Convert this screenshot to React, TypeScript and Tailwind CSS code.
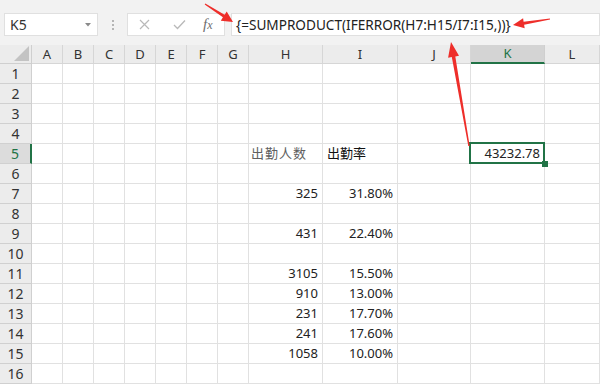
import React from "react";

const FONT = { fontFamily: '"Noto Sans", "Noto Sans CJK SC", "Liberation Sans", sans-serif' };

const cols = ["A", "B", "C", "D", "E", "F", "G", "H", "I", "J", "K", "L"];

type Cell = { text: string; align?: "left" | "right"; cls?: string };
const data: Record<number, Record<string, Cell>> = {
  5: {
    H: { text: "出勤人数", align: "left", cls: "text-[#606060] tracking-[1px] pl-[2px]" },
    I: { text: "出勤率", align: "left", cls: "text-[#111]" },
    K: { text: "43232.78", align: "right" },
  },
  7: { H: { text: "325" }, I: { text: "31.80%" } },
  9: { H: { text: "431" }, I: { text: "22.40%" } },
  11: { H: { text: "3105" }, I: { text: "15.50%" } },
  12: { H: { text: "910" }, I: { text: "13.00%" } },
  13: { H: { text: "231" }, I: { text: "17.70%" } },
  14: { H: { text: "241" }, I: { text: "17.60%" } },
  15: { H: { text: "1058" }, I: { text: "10.00%" } },
};

function arrow(tx: number, ty: number, hx: number, hy: number, w1: number, w2: number, L: number, H: number) {
  const dx = hx - tx, dy = hy - ty;
  const len = Math.hypot(dx, dy);
  const ux = dx / len, uy = dy / len;
  const px = -uy, py = ux;
  const bx = hx - ux * L, by = hy - uy * L;
  const pts = [
    [tx + px * w1 / 2, ty + py * w1 / 2],
    [bx + px * w2 / 2, by + py * w2 / 2],
    [bx + px * H, by + py * H],
    [hx, hy],
    [bx - px * H, by - py * H],
    [bx - px * w2 / 2, by - py * w2 / 2],
    [tx - px * w1 / 2, ty - py * w1 / 2],
  ];
  return pts.map((p) => p.map((v) => v.toFixed(1)).join(",")).join(" ");
}

export default function App() {
  return (
    <div className="relative w-[600px] h-[385px] overflow-hidden bg-white" style={FONT}>
      {/* toolbar */}
      <div className="h-[45px] bg-[#f2f2f2] flex items-start pt-[13px]">
        <div className="ml-[4px] w-[94px] h-[23px] bg-white border border-[#e0e0e0] flex items-center justify-between pl-[5px] pr-[6px]">
          <span className="text-[14px] text-[#333] leading-none">K5</span>
          <svg width="6" height="4" viewBox="0 0 6 4"><path d="M0 0h6L3 3.5z" fill="#8a8a8a" /></svg>
        </div>
        <div className="w-[29px] h-[23px] flex flex-col items-center justify-center gap-[2px]">
          <span className="w-[2px] h-[2px] bg-[#b5b5b5]" />
          <span className="w-[2px] h-[2px] bg-[#b5b5b5]" />
          <span className="w-[2px] h-[2px] bg-[#b5b5b5]" />
        </div>
        <div className="w-[98px] h-[23px] bg-white border border-[#e0e0e0] flex items-center">
          <svg className="ml-[11px]" width="11" height="11" viewBox="0 0 11 11"><path d="M1 1L10 10M10 1L1 10" stroke="#b9b9b9" strokeWidth="1.2" /></svg>
          <svg className="ml-[23px]" width="13" height="11" viewBox="0 0 13 11"><path d="M1 6L4.5 9.5L12 1.5" stroke="#b9b9b9" strokeWidth="1.3" fill="none" /></svg>
          <span className="ml-[17px] text-[15px] italic text-[#6e6e6e] leading-none" style={{ fontFamily: '"Liberation Serif", serif' }}>
            f<span className="text-[12px]">x</span>
          </span>
        </div>
        <div className="ml-[6px] flex-1 h-[23px] bg-white border border-[#e0e0e0] flex items-center pl-[4px]">
          <span className="text-[13.6px] text-[#222] leading-none">{"{=SUMPRODUCT(IFERROR(H7:H15/I7:I15,))}"}</span>
        </div>
      </div>

      {/* sheet */}
      <div className="grid grid-cols-[32px_31px_31px_31px_31px_31px_31px_31px_74px_75px_73px_74px_1fr] text-[13px]">
        {/* header row */}
        <div className="h-[19px] bg-[#ececec] border-r border-b border-[#cfcfcf] relative">
          <svg className="absolute right-[2px] bottom-[2px]" width="15" height="15" viewBox="0 0 15 15"><path d="M15 0V15H0z" fill="#c3c3c3" /></svg>
        </div>
        {cols.map((c) =>
          c === "K" ? (
            <div key={c} className="h-[19px] bg-[#d4d4d4] border-r border-[#cfcfcf] border-b-2 border-b-[#217346] flex items-center justify-center text-[#217346] leading-none">
              {c}
            </div>
          ) : (
            <div key={c} className="h-[19px] bg-[#ececec] border-r border-b border-[#d6d6d6] flex items-center justify-center text-[#333] leading-none">
              {c}
            </div>
          )
        )}
        {Array.from({ length: 16 }, (_, i) => i + 1).map((r) => (
          <React.Fragment key={r}>
            {r === 5 ? (
              <div className="h-[20px] bg-[#dcdcdc] border-b border-[#d0d0d0] border-r-2 border-r-[#217346] flex items-center justify-center text-[#217346] text-[14px] leading-none">
                {r}
              </div>
            ) : (
              <div className="h-[20px] bg-[#ececec] border-r border-b border-[#d0d0d0] flex items-center justify-center text-[#333] text-[14px] leading-none">
                {r}
              </div>
            )}
            {cols.map((c) => {
              const cell = data[r]?.[c];
              const sel = r === 5 && c === "K";
              return (
                <div
                  key={c}
                  className={
                    "h-[20px] border-r border-b border-[#e1e1e1] flex items-center px-[4px] leading-none whitespace-nowrap relative " +
                    (sel ? "z-10 " : "") +
                    (cell?.align === "left" ? "justify-start " : "justify-end ") +
                    (cell?.cls ?? "text-[#222]")
                  }
                >
                  {cell?.text}
                  {sel && (
                    <>
                      <div className="absolute left-[-2px] top-[-2px] w-[76px] h-[22px] border-2 border-[#217346]" />
                      <div className="absolute right-[-4px] bottom-[-4px] w-[6px] h-[6px] bg-[#217346]" />
                    </>
                  )}
                </div>
              );
            })}
          </React.Fragment>
        ))}
      </div>

      {/* annotation arrows */}
      <svg className="absolute left-0 top-0 pointer-events-none z-20" width="600" height="385" viewBox="0 0 600 385">
        <polygon points={arrow(205, 4, 233, 22, 1, 3, 11, 5.5)} fill="#ee2e2a" />
        <polygon points={arrow(550, 19, 513, 25, 1, 3, 11, 5)} fill="#ee2e2a" />
        <polygon points={arrow(469, 146, 451, 42, 1.5, 3.5, 15, 5.5)} fill="#ee2e2a" />
      </svg>
    </div>
  );
}
